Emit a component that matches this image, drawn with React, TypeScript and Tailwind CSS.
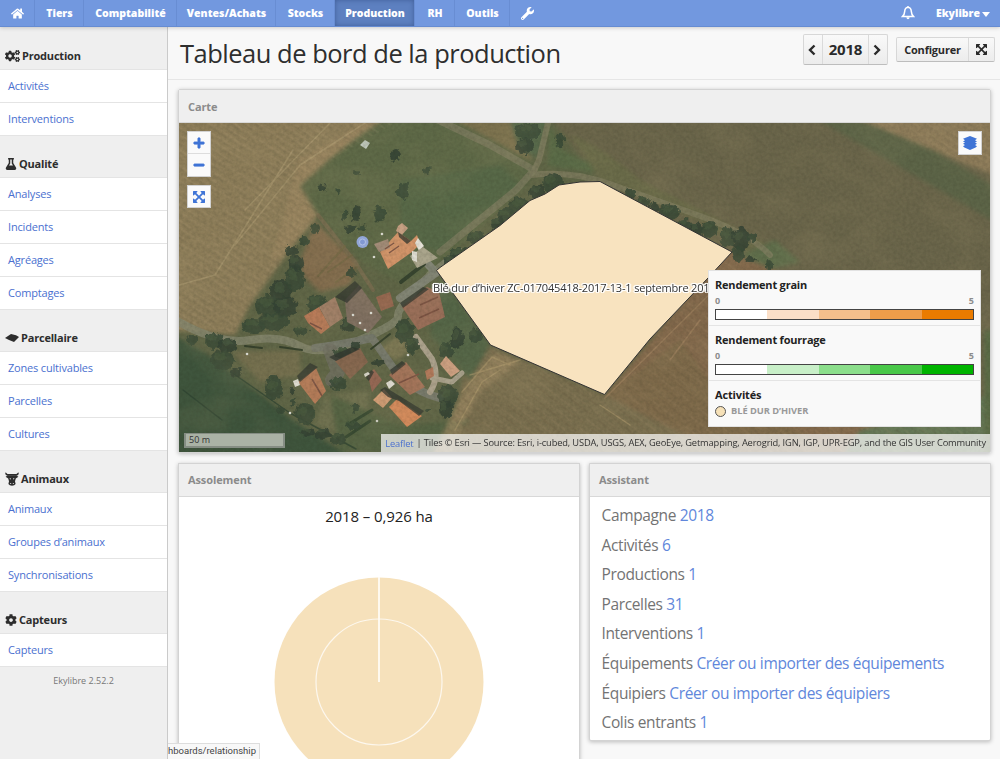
import React from "react";
import { FaHome, FaWrench, FaCogs, FaFlask, FaCog, FaPlus, FaMinus } from "react-icons/fa";

const navItems = [
  { label: "Tiers", width: "w-[49px]" },
  { label: "Comptabilité", width: "w-[93px]" },
  { label: "Ventes/Achats", width: "w-[99px]" },
  { label: "Stocks", width: "w-[59px]" },
  { label: "Production", width: "w-[80px]", active: true },
  { label: "RH", width: "w-[40px]" },
  { label: "Outils", width: "w-[55px]" },
];

function FieldIcon() {
  return (
    <svg viewBox="0 0 14 10" className="h-[10px] w-[14px]" fill="currentColor">
      <path d="M0 5 L6 1 L11 2.2 L14 4 L9 9 L4 7z" />
    </svg>
  );
}

function CowIcon() {
  return (
    <svg viewBox="0 0 14 14" className="h-[14px] w-[14px]" fill="currentColor">
      <path d="M0.3 0.4 Q-0.2 3.6 2.6 3.8 L4 3.4 H10 L11.4 3.8 Q14.2 3.6 13.7 0.4 L12.4 1 Q12.4 2 11 2 L3 2 Q1.6 2 1.600 1z" />
      <path d="M0.600 4.800 L3 3.200 H11 L13.400 4.800 L10.800 6.600 L10 9.200 L10.600 12 Q9.600 13.800 7 13.800 Q4.400 13.800 3.400 12 L4 9.200 L3.200 6.600z" />
      <path d="M4.800 6l1.100.4v1l-1.100-.5zM9.200 6l-1.100.4v1l1.100-.5zM5 11.200h1.200v.9H5zM7.800 11.200H9v.9H7.800z" fill="#efefef" />
    </svg>
  );
}

function ExpandIcon({ className }: { className: string }) {
  return (
    <svg viewBox="0 0 1536 1536" className={className} fill="currentColor">
      <path d="M1283 413l-355 355 355 355 144-144q29-31 70-14 39 17 39 59v448q0 26-19 45t-45 19h-448q-42 0-59-40-17-39 14-69l144-144-355-355-355 355 144 144q31 30 14 69-17 40-59 40H64q-26 0-45-19t-19-45v-448q0-42 40-59 39-17 69 14l144 144 355-355-355-355-144 144q-19 19-45 19-12 0-24-5-40-17-40-59V64q0-26 19-45t45-19h448q42 0 59 40 17 39-14 69L413 253l355 355 355-355-144-144q-31-30-14-69 17-40 59-40h448q26 0 45 19t19 45v448q0 42-39 59-13 5-25 5-26 0-45-19z" />
    </svg>
  );
}

function Chevron({ d }: { d: string }) {
  return (
    <svg viewBox="0 0 8 12" className="h-[12px] w-[8px]" fill="none" stroke="currentColor" strokeWidth="2.4">
      <path d={d} />
    </svg>
  );
}

function BellIcon() {
  return (
    <svg viewBox="0 0 14 14" className="h-[14px] w-[14px]" fill="none" stroke="white" strokeWidth="1.5">
      <path d="M7 1.2 C4.6 1.4 3.8 3 3.7 5.4 C3.6 8 2.8 9.2 1.4 10.6 H12.6 C11.2 9.2 10.4 8 10.3 5.4 C10.2 3 9.4 1.4 7 1.2z" />
      <path d="M5.4 11.2 Q5.6 13.2 7 13.2 Q8.4 13.2 8.6 11.2z" fill="white" stroke="none" />
      <circle cx="7" cy="0.9" r="0.9" fill="white" stroke="none" />
    </svg>
  );
}

function LayersIcon() {
  return (
    <svg viewBox="0 0 14 14" className="h-[14px] w-[14px]" fill="#3f74d6">
      <path d="M7 0L14 2.800 12 4.200 14 5.400 12 6.600 14 7.800 12 9 14 10.200 12.600 11.400 7 14 1.400 11.400 0 10.200 2 9 0 7.800 2 6.600 0 5.400 2 4.200 0 2.800z" />
    </svg>
  );
}

const sections = [
  { title: "Production", icon: <FaCogs className="h-[14px] w-[15px]" />, items: ["Activités", "Interventions"] },
  { title: "Qualité", icon: <FaFlask className="h-[12px] w-[12px]" />, items: ["Analyses", "Incidents", "Agréages", "Comptages"] },
  { title: "Parcellaire", icon: <FieldIcon />, items: ["Zones cultivables", "Parcelles", "Cultures"] },
  { title: "Animaux", icon: <CowIcon />, items: ["Animaux", "Groupes d’animaux", "Synchronisations"] },
  { title: "Capteurs", icon: <FaCog className="h-[12px] w-[12px]" />, items: ["Capteurs"] },
];

const trees: [number, number, number, number][] = [
  [395, 154, 5, 6], [356, 172, 3, 3], [426, 170, 3, 4], [321, 187, 4, 4], [337, 190, 2.5, 3],
  [402, 190, 6, 9], [355, 212, 5, 8], [379, 213, 6, 8], [344, 214, 3, 5], [349, 228, 5, 4], [361, 227, 4, 4],
  [527, 130, 13, 8], [524, 145, 9, 8], [559, 139, 5, 7], [552, 182, 11, 10], [536, 191, 8, 7],
  [519, 205, 12, 9], [505, 215, 9, 8], [497, 223, 7, 7], [475, 237, 9, 7], [458, 253, 9, 7], [450, 260, 8, 6],
  [629, 193, 5, 5], [642, 201, 7, 6], [653, 206, 5, 5], [668, 211, 11, 8], [684, 224, 8, 6], [695, 229, 7, 7],
  [708, 228, 8, 8], [727, 236, 8, 10], [740, 238, 9, 12], [737, 253, 6, 8], [752, 236, 6, 4],
  [280, 290, 11, 11], [294, 277, 10, 13], [267, 305, 13, 11], [284, 306, 12, 11], [252, 325, 12, 7], [272, 321, 16, 9],
  [290, 250, 6, 5], [303, 240, 5, 5], [314, 227, 5, 5], [295, 262, 8, 8], [300, 330, 8, 4],
  [316, 303, 10, 9], [347, 324, 7, 8], [404, 330, 9, 12], [411, 344, 7, 9], [456, 337, 7, 11], [445, 350, 7, 8],
  [213, 340, 9, 8], [227, 344, 10, 7], [191, 339, 6, 5], [221, 359, 12, 10], [235, 371, 6, 4],
  [273, 387, 9, 12], [304, 413, 10, 11], [291, 390, 2, 3], [292, 401, 3, 3], [280, 409, 4, 4], [322, 433, 8, 5], [337, 438, 8, 6],
  [342, 352, 10, 5], [355, 345, 4, 4], [337, 382, 8, 7], [447, 395, 10, 11], [445, 408, 7, 10], [354, 407, 4, 5], [352, 425, 8, 4],
  [377, 362, 6, 3], [350, 272, 4, 5], [475, 335, 7, 7], [307, 432, 7, 4],
  [427, 409, 3, 2], [768, 265, 4, 6], [750, 258, 6, 3],
];

const roofs: { points: string; fill: string }[] = [
  { points: "380,252 398,232 411,241 417,235 420,244 412,252 388,269", fill: "#d39469" },
  { points: "398,226 402,223 408,228 402,235 396,231", fill: "#c8a184" },
  { points: "374,244 388,239 390,248 379,252", fill: "#a28b78" },
  { points: "418,238 424,246 419,251 415,243", fill: "#e6e2d8" },
  { points: "304,316 319,307 330,327 321,334 308,323", fill: "#b87a58" },
  { points: "319,307 335,297 343,318 330,327", fill: "#a07f67" },
  { points: "345,300 359,285 382,317 368,333 347,322", fill: "#807061" },
  { points: "376,297 390,292 394,306 381,311", fill: "#976951" },
  { points: "402,307 427,287 439,292 445,317 418,330", fill: "#9a6f59" },
  { points: "335,361 360,348 368,362 350,379", fill: "#86674f" },
  { points: "298,382 316,368 326,391 315,404", fill: "#b57b58" },
  { points: "368,376 374,369 382,380 372,392", fill: "#946653" },
  { points: "389,375 406,362 425,387 410,395", fill: "#a37359" },
  { points: "425,371 433,367 434,376 427,380", fill: "#b3785a" },
  { points: "373,400 384,389 392,398 383,408", fill: "#d19d75" },
  { points: "389,407 397,399 422,416 407,427", fill: "#d5895a" },
  { points: "440,364 446,356 460,371 451,377", fill: "#cda081" },
];

const shadows = [
  "335,297 355,281 362,288 347,303", "297,376 310,363 318,367 300,382", "329,357 352,347 360,349 336,361",
  "398,232 411,241 407,244 399,237", "400,303 423,287 429,289 403,308", "390,370 402,361 406,364 392,375",
  "366,378 371,370 374,372 369,381", "380,390 385,387 424,411 419,416 399,401 388,397",
];

function Aerial() {
  return (
    <svg viewBox="179 123 811 329" className="h-full w-full" preserveAspectRatio="none">
      <defs>
        <filter id="soft" x="-5%" y="-5%" width="110%" height="110%" colorInterpolationFilters="sRGB"><feGaussianBlur stdDeviation="2" /></filter>
        <filter id="edge" x="-5%" y="-5%" width="110%" height="110%" colorInterpolationFilters="sRGB"><feGaussianBlur stdDeviation="0.6" /></filter>
        <filter id="leaf" x="-5%" y="-5%" width="110%" height="110%" colorInterpolationFilters="sRGB">
          <feTurbulence type="fractalNoise" baseFrequency="0.2" numOctaves="2" seed="4" result="n" />
          <feDisplacementMap in="SourceGraphic" in2="n" scale="7" xChannelSelector="R" yChannelSelector="G" />
          <feGaussianBlur stdDeviation="0.7" />
        </filter>
        <filter id="grain" x="0" y="0" width="100%" height="100%" colorInterpolationFilters="sRGB">
          <feTurbulence type="fractalNoise" baseFrequency="0.3" numOctaves="2" seed="8" />
          <feColorMatrix values="0 0 0 0 0.15  0 0 0 0 0.16  0 0 0 0 0.1  1.2 0 0 0 -0.4" />
        </filter>
        <filter id="light" x="0" y="0" width="100%" height="100%" colorInterpolationFilters="sRGB">
          <feTurbulence type="fractalNoise" baseFrequency="0.02 0.03" numOctaves="3" seed="21" />
          <feColorMatrix values="0 0 0 0 0.72  0 0 0 0 0.65  0 0 0 0 0.48  0 1.6 0 0 -0.65" />
        </filter>
        <pattern id="furrow" width="60" height="13" patternUnits="userSpaceOnUse" patternTransform="rotate(33)">
          <path d="M0 2H60M8 9H44" stroke="#b8a780" strokeWidth="1" opacity="0.2" />
          <path d="M0 5H50M20 11H60" stroke="#6a6040" strokeWidth="1.3" opacity="0.15" />
        </pattern>
        <pattern id="plough" width="80" height="11" patternUnits="userSpaceOnUse" patternTransform="rotate(38)">
          <path d="M0 2H70" stroke="#a78f68" strokeWidth="1" opacity="0.18" />
          <path d="M10 7H80" stroke="#5a4a30" strokeWidth="1.4" opacity="0.12" />
        </pattern>
        <clipPath id="west"><path d="M179 123H395L330 160 300 186 318 212 290 250 250 305 235 332 179 330z" /></clipPath>
      </defs>
      <rect x="179" y="123" width="811" height="329" fill="#606647" />

      <g filter="url(#soft)">
        <path d="M170 115H392L362 134 330 159 300 186 318 215 290 250 250 305 235 335 170 330z" fill="#8e7e5a" />
        <path d="M298 160L365 123H395L362 134 330 159 300 186 318 215 290 250 270 262 285 215z" fill="#98845f" />
        <path d="M390 115H445L534 165 528 184 440 262 425 275 400 282 365 265 318 215 300 186 330 159 362 134z" fill="#5f6a48" />
        <path d="M400 180L500 165 520 185 440 252 400 240z" fill="#586948" />
        <path d="M445 115H545L530 160z" fill="#7d734f" />
        <path d="M510 120H547L538 158 520 150z" fill="#54684a" />
        <path d="M549 115H1000V460H720L732 252 600 182z" fill="#6b664b" />
        <path d="M549 123L562 150 610 172 590 172 548 166z" fill="#5b6c48" />
        <path d="M570 135Q600 145 640 180L800 260 760 262 700 222 600 180z" fill="#6b6c4a" />
        <path d="M810 115H875L1000 190V225z" fill="#5d6548" />
        <path d="M848 115H1000V178z" fill="#8f7d5b" />
        <path d="M735 258L775 240 800 262 760 272z" fill="#606f4c" />
        <path d="M726 250L605 395 720 460H860L990 440V420L775 270z" fill="#83694c" />
        <path d="M488 345L605 395 735 460H430L455 410 465 370z" fill="#7b7050" />
        <path d="M605 395L740 460H860L720 395 680 340z" fill="#7f6b4b" />
        <path d="M860 430L990 395V460H840z" fill="#667958" />
        <path d="M984 330V460H995V330z" fill="#5b6c47" />
        <path d="M315 222L340 246 357 262 350 285 320 292 303 275 300 262z" fill="#836d4e" />
        <path d="M170 333L210 356 245 382 290 418 356 460H170z" fill="#3f553d" />
        <path d="M232 352L300 350 300 375 260 382z" fill="#75704f" />
        <path d="M325 395L370 390 365 420 335 432 315 425z" fill="#6f7150" />
        <path d="M378 350L400 334 410 350 398 361z" fill="#7c7854" />
        <path d="M330 395L400 425 470 420 430 452H340z" fill="#566444" />
        <path d="M440 275L490 345 470 380 430 335z" fill="#566748" />
        <path d="M433 453L455 408 470 382 495 352 520 362 480 392 460 430 453 453z" fill="#988660" opacity=".75" />
      </g>

      <g clipPath="url(#west)"><rect x="179" y="123" width="250" height="240" fill="url(#furrow)" /></g>
      <path d="M488 345L605 395 726 258 990 400V452H435z" fill="url(#plough)" />
      <path d="M600 123H850L990 215V330H780L732 250 640 190z" fill="url(#plough)" opacity=".2" />
      <path d="M865 123H990V172z" fill="url(#furrow)" opacity=".6" />

      <g fill="none" filter="url(#edge)" strokeLinecap="round" strokeLinejoin="round">
        <path d="M293 150L215 275 179 285M235 245L300 165 365 123M330 123L245 210" stroke="#b5a37b" strokeWidth="1.5" opacity=".45" />
        <path d="M179 322Q220 345 250 340T300 346T360 340T398 316T430 275L460 252" stroke="#85876f" strokeWidth="8" opacity=".8" />
        <path d="M315 348Q340 345 372 338L396 372Q415 392 440 398" stroke="#777a6c" strokeWidth="8" />
        <path d="M330 350L338 372 332 380" stroke="#707063" strokeWidth="14" opacity=".75" />
        <path d="M416 337L432 359Q440 377 430 392" stroke="#aca28d" strokeWidth="6" />
        <path d="M432 378L452 382 462 373" stroke="#aaa38e" strokeWidth="5" />
        <path d="M426 262L436 273 400 298" stroke="#828575" strokeWidth="8" />
        <path d="M436 119L490 145 534 170 516 190 440 252" stroke="#7e7c60" strokeWidth="7" opacity=".75" />
        <path d="M548 123L539 160 532 175Q570 170 610 184T700 216T770 255" stroke="#807d60" strokeWidth="6" opacity=".75" />
        <path d="M318 215L355 262 373 290" stroke="#7d6e51" strokeWidth="4" opacity=".7" />
        <path d="M245 346L262 348M280 347L302 350M371 349L390 334" stroke="#36412c" strokeWidth="2" />
        <path d="M183 390L222 420M231 372L290 413 356 449" stroke="#2c4230" strokeWidth="1.5" opacity=".7" />
        <path d="M462 392L492 357 510 365M455 430L482 382 500 370M470 375L520 360M600 405L630 425" stroke="#b8a274" strokeWidth="1.500" opacity=".45" />
        <path d="M605 398L728 276M670 360L700 320" stroke="#a18461" strokeWidth="1.5" opacity=".6" />
        <path d="M328 272L352 255M318 276L345 246M336 282L357 267" stroke="#6f6742" strokeWidth="2" opacity=".6" />
        <path d="M349 424L372 410M346 437L370 421" stroke="#384a32" strokeWidth="3" />
        <path d="M401 282L424 264" stroke="#37442f" strokeWidth="4" />
      </g>

      <g filter="url(#leaf)">
        {trees.map(([x, y, rx, ry], i) => (
          <ellipse key={i} cx={x + 1} cy={y + 1} rx={rx} ry={ry} fill={i % 3 === 0 ? "#344334" : "#3a4b38"} opacity=".88" />
        ))}
        {trees.filter((t) => t[2] > 6).map(([x, y, rx, ry], i) => (
          <ellipse key={i} cx={x - 1} cy={y - 2} rx={rx * 0.5} ry={ry * 0.45} fill="#4d6043" opacity=".45" />
        ))}
      </g>
      <g filter="url(#edge)">
        {roofs.map((r) => <polygon key={r.points} points={r.points} fill={r.fill} />)}
        {shadows.map((s) => <polygon key={s} points={s} fill="#30362f" opacity=".75" />)}
        <path d="M423 247L438 258 429 262 417 268 410 256z" fill="#aaa58c" />
        <path d="M360 145L365 140 370 143 366 149z" fill="#c0c9bd" />
        <path d="M293 381l5-2 2 6-5 2zM412 251l5 1 0 10-5-2zM364 374l4-2 2 2-5 3zM386 383l5-3 4 4-6 5z" fill="#e2dfd5" />
        <path d="M389 253l10-7M385 249l9-6M310 323l12 6M312 379l10 17M399 383l20-9M420 305l18-8M419 318l20-9" stroke="#7b5242" strokeWidth="1.5" />
        {[[353, 315], [360, 323], [365, 330], [371, 313], [408, 355], [377, 421], [290, 413], [382, 234], [247, 354], [374, 257], [413, 257]].map(([x, y]) => (
          <circle key={x} cx={x} cy={y} r="1.3" fill="#dadbd2" />
        ))}
      </g>
      <rect x="179" y="123" width="811" height="329" filter="url(#grain)" opacity=".22" />
      <rect x="179" y="123" width="811" height="329" filter="url(#light)" opacity=".16" />
      <circle cx="362.500" cy="242" r="6" fill="#91a5d6" />
      <circle cx="362.500" cy="242" r="3" fill="#8198d2" stroke="#b1c0e3" strokeWidth="1" />

      <path d="M436.500 270.500L440 267.500 500 225.500 530 200.500 545 194 559 185 580 182 600 181.500 732 252 708 278 650 339 604.500 394.500 490.500 345z" fill="#f8e3bf" stroke="#333333" strokeWidth="1" />
    </svg>
  );
}

function Scale({ title, colors }: { title: string; colors: string[] }) {
  return (
    <div className="h-[55px] border-b border-[#e4e4e4] px-[6px] pt-[6px]">
      <div className="text-[11px] leading-[16px] font-bold tracking-[-0.2px] text-[#222]">{title}</div>
      <div className="flex justify-between text-[9px] leading-[16px] font-bold text-[#8c8c8c]"><span>0</span><span>5</span></div>
      <div className="flex h-[11px] border border-[#444]">
        {colors.map((c) => <div key={c} className={"flex-1 " + c} />)}
      </div>
    </div>
  );
}

const assistant = [
  ["Campagne", "2018"], ["Activités", "6"], ["Productions", "1"], ["Parcelles", "31"], ["Interventions", "1"],
  ["Équipements", "Créer ou importer des équipements"], ["Équipiers", "Créer ou importer des équipiers"], ["Colis entrants", "1"],
];

export default function App() {
  return (
    <div className="relative flex h-[759px] w-[1000px] flex-col overflow-hidden bg-[#f8f8f8] font-['Open_Sans',sans-serif] text-[#333]">
      <nav className="z-10 flex h-[27px] shrink-0 items-stretch border-b border-[#668cd2] bg-[#7298df] text-[10.5px] font-extrabold text-white shadow-[0_1px_4px_rgba(0,0,0,0.18)]">
        <a className="flex w-[35px] items-center justify-center border-r border-[#688dd3]"><FaHome className="h-[13px] w-[13px]" /></a>
        {navItems.map((n) => (
          <a key={n.label} className={"flex items-center justify-center pt-[2px] pl-px whitespace-nowrap border-r border-[#688dd3] " + n.width + (n.active ? " bg-[#5d80c0] shadow-[inset_0_0_5px_rgba(20,40,90,0.4)]" : "")}>{n.label}</a>
        ))}
        <a className="flex w-[35px] items-center justify-center"><FaWrench className="h-[13px] w-[13px]" /></a>
        <div className="ml-auto flex items-center pr-[10px]">
          <BellIcon />
          <span className="ml-[21px] pt-[2px]">Ekylibre</span>
          <svg viewBox="0 0 8 5" className="mt-[2px] ml-[2px] h-[5px] w-[8px]" fill="white"><path d="M0 0H8L4 5z" /></svg>
        </div>
      </nav>

      <div className="flex min-h-0 flex-1">
        <aside className="w-[168px] shrink-0 border-r border-[#cacaca] bg-[#efefef] pt-px">
          {sections.map((s) => (
            <section key={s.title}>
              <h2 className="flex h-[42px] items-end gap-[2px] border-b border-[#e4e4e4] pb-[5px] pl-[5px] text-[11px] leading-[16px] font-bold tracking-[-0.2px] text-[#2d2d2d]">
                <span className="flex h-[16px] items-center">{s.icon}</span>{s.title}
              </h2>
              {s.items.map((i) => (
                <a key={i} className="flex h-[33px] items-center border-b border-[#e4e4e4] bg-white pl-[8px] text-[11px] tracking-[-0.18px] text-[#4a70cf]">{i}</a>
              ))}
            </section>
          ))}
          <div className="pt-[7px] text-center text-[9px] leading-[13px] text-[#777]">Ekylibre 2.52.2</div>
        </aside>

        <main className="flex min-w-0 flex-1 flex-col">
          <header className="flex h-[53px] shrink-0 items-center border-b border-[#e6e6e6] pl-[12px] pr-[5px]">
            <h1 className="text-[25.5px] leading-[40px] tracking-[-0.49px] whitespace-nowrap text-[#2e2e2e]">Tableau de bord de la production</h1>
            <div className="mb-[7px] ml-auto flex items-center">
              <div className="flex h-[31px] rounded-[2px] border border-[#d7d7d7] border-b-[#bdbdbd] bg-gradient-to-b from-[#f9f9f9] to-[#ececec] text-[#2a2a2a]">
                <button className="flex w-[18px] items-center justify-center pr-[2px]"><Chevron d="M6.500 1.500L2 6L6.500 10.500" /></button>
                <span className="flex w-[47px] items-center justify-center border-x border-[#dadada] text-[15px] font-bold tracking-[-0.2px]">2018</span>
                <button className="flex w-[18px] items-center justify-center pr-[3px]"><Chevron d="M1.500 1.500L6 6L1.500 10.500" /></button>
              </div>
              <div className="ml-[8px] flex h-[25px] rounded-[2px] border border-[#d7d7d7] border-b-[#bdbdbd] bg-gradient-to-b from-[#f9f9f9] to-[#ececec] text-[#2a2a2a]">
                <button className="flex w-[72px] items-center justify-center border-r border-[#dadada] pt-px text-[11px] font-bold tracking-[-0.2px]">Configurer</button>
                <button className="flex w-[25px] items-center justify-center"><ExpandIcon className="h-[11px] w-[11px]" /></button>
              </div>
            </div>
          </header>

          <div className="flex flex-1 flex-col gap-[10px] pt-[9px] pr-[9px] pl-[10px]">
            <section className="flex h-[364px] shrink-0 flex-col rounded-[2px] border border-[#d3d3d3] shadow-[0_1px_4px_rgba(0,0,0,0.25)]">
              <h3 className="flex h-[33px] shrink-0 items-center border-b border-[#d8d8d8] bg-[#efefef] pt-[2px] pl-[9px] text-[11px] font-bold tracking-[-0.1px] text-[#8b8b8b]">Carte</h3>
              <div className="relative min-h-0 flex-1 overflow-hidden">
                <Aerial />
                <div className="absolute top-[8px] left-[8px] w-[24px] border border-[#d2d2d2] bg-[#fafafa] text-[#3f74d6]">
                  <button className="flex h-[22px] w-full items-center justify-center border-b border-[#ddd]"><FaPlus className="h-[12px] w-[12px]" stroke="currentColor" strokeWidth="30" /></button>
                  <button className="flex h-[22px] w-full items-center justify-center"><FaMinus className="h-[12px] w-[12px]" stroke="currentColor" strokeWidth="30" /></button>
                </div>
                <button className="absolute top-[62px] left-[8px] flex h-[23px] w-[24px] items-center justify-center border border-[#d2d2d2] bg-[#fafafa] text-[#3f74d6]"><ExpandIcon className="h-[12px] w-[12px]" /></button>
                <button className="absolute top-[8px] right-[8px] flex h-[24px] w-[24px] items-center justify-center border border-[#d2d2d2] bg-[#fafafa]"><LayersIcon /></button>
                <div className="absolute top-[157px] left-[254px] text-[11px] leading-[16px] tracking-[-0.17px] whitespace-nowrap text-[#333] [text-shadow:-1px_-1px_0_#fff,1px_-1px_0_#fff,-1px_1px_0_#fff,1px_1px_0_#fff,0_-1px_1px_#fff,0_1px_1px_#fff,-2px_0_1px_#fff,2px_0_1px_#fff]">Blé dur d’hiver ZC-017045418-2017-13-1 septembre 2017</div>
                <div className="absolute right-[9px] bottom-[25px] h-[157px] w-[273px] border border-[#e2e2e2] bg-[#f9f9f9]">
                  <Scale title="Rendement grain" colors={["bg-white", "bg-[#fbdfc7]", "bg-[#f5c08c]", "bg-[#ef9d4a]", "bg-[#ea7b00]"]} />
                  <Scale title="Rendement fourrage" colors={["bg-white", "bg-[#c8efc8]", "bg-[#8bde8b]", "bg-[#49c849]", "bg-[#00b400]"]} />
                  <div className="px-[6px] pt-[6px]">
                    <div className="text-[11px] leading-[16px] font-bold tracking-[-0.15px] text-[#222]">Activités</div>
                    <div className="flex items-center gap-[5px] text-[9.300px] leading-[16px] font-bold tracking-[-0.05px] text-[#999]">
                      <span className="h-[11px] w-[11px] rounded-full border border-[#555] bg-[#f6e1b8]" />BLÉ DUR D’HIVER
                    </div>
                  </div>
                </div>
                <div className="absolute bottom-[4px] left-[5px] h-[15px] w-[101px] border-2 border-t border-[#858d83] bg-[#aab2a5] pl-[3px] text-[9px] leading-[12px] text-[#333]">50 m</div>
                <div className="absolute right-0 bottom-0 flex h-[18px] w-[609px] items-center justify-end bg-white/70 pr-[4px] text-[9.300px] tracking-[-0.145px] whitespace-nowrap text-[#333]"><span className="mr-[3px] pt-[2px] text-[#4a70cf]">Leaflet</span>| Tiles © Esri — Source: Esri, i-cubed, USDA, USGS, AEX, GeoEye, Getmapping, Aerogrid, IGN, IGP, UPR-EGP, and the GIS User Community</div>
              </div>
            </section>

            <div className="flex items-start gap-[9px]">
              <section className="h-[310px] w-[402px] shrink-0 border border-[#d3d3d3] bg-white shadow-[0_1px_4px_rgba(0,0,0,0.25)]">
                <h3 className="flex h-[33px] items-center border-b border-[#d8d8d8] bg-[#efefef] pt-px pl-[9px] text-[11px] font-bold tracking-[-0.1px] text-[#8b8b8b]">Assolement</h3>
                <div className="pt-[8px] text-center text-[15px] leading-[22px] tracking-[-0.1px] text-[#222]">2018 – 0,926 ha</div>
                <svg viewBox="0 0 210 210" className="mx-auto mt-[50px] block h-[210px] w-[210px]">
                  <circle cx="105" cy="105" r="104.500" fill="#f6e1bb" />
                  <circle cx="105" cy="105" r="63" fill="none" stroke="#fff" strokeOpacity=".75" strokeWidth="1.2" />
                  <path d="M105 0V105" stroke="#fffdf8" strokeWidth="1.700" />
                </svg>
              </section>
              <section className="h-[278px] w-[402px] shrink-0 rounded-b-[2px] border border-[#d3d3d3] bg-white shadow-[0_1px_4px_rgba(0,0,0,0.25)]">
                <h3 className="flex h-[33px] items-center border-b border-[#d8d8d8] bg-[#efefef] pt-px pl-[9px] text-[11px] font-bold tracking-[-0.1px] text-[#8b8b8b]">Assistant</h3>
                <ul className="pt-[4px] pl-[11.500px] text-[15.500px] leading-[29.600px] tracking-[-0.36px] text-[#737373]">
                  {assistant.map(([label, value]) => (
                    <li key={label} className="whitespace-nowrap">{label} <a className="text-[#6187db]">{value}</a></li>
                  ))}
                </ul>
              </section>
            </div>
          </div>
        </main>
      </div>
      <div className="absolute bottom-0 left-[168px] flex h-[16px] w-[92px] items-center border border-b-0 border-l-0 border-[#ddd] bg-[#f8f8f8] font-['Roboto',sans-serif] text-[9.500px] whitespace-nowrap text-[#444]">hboards/relationship</div>
    </div>
  );
}
